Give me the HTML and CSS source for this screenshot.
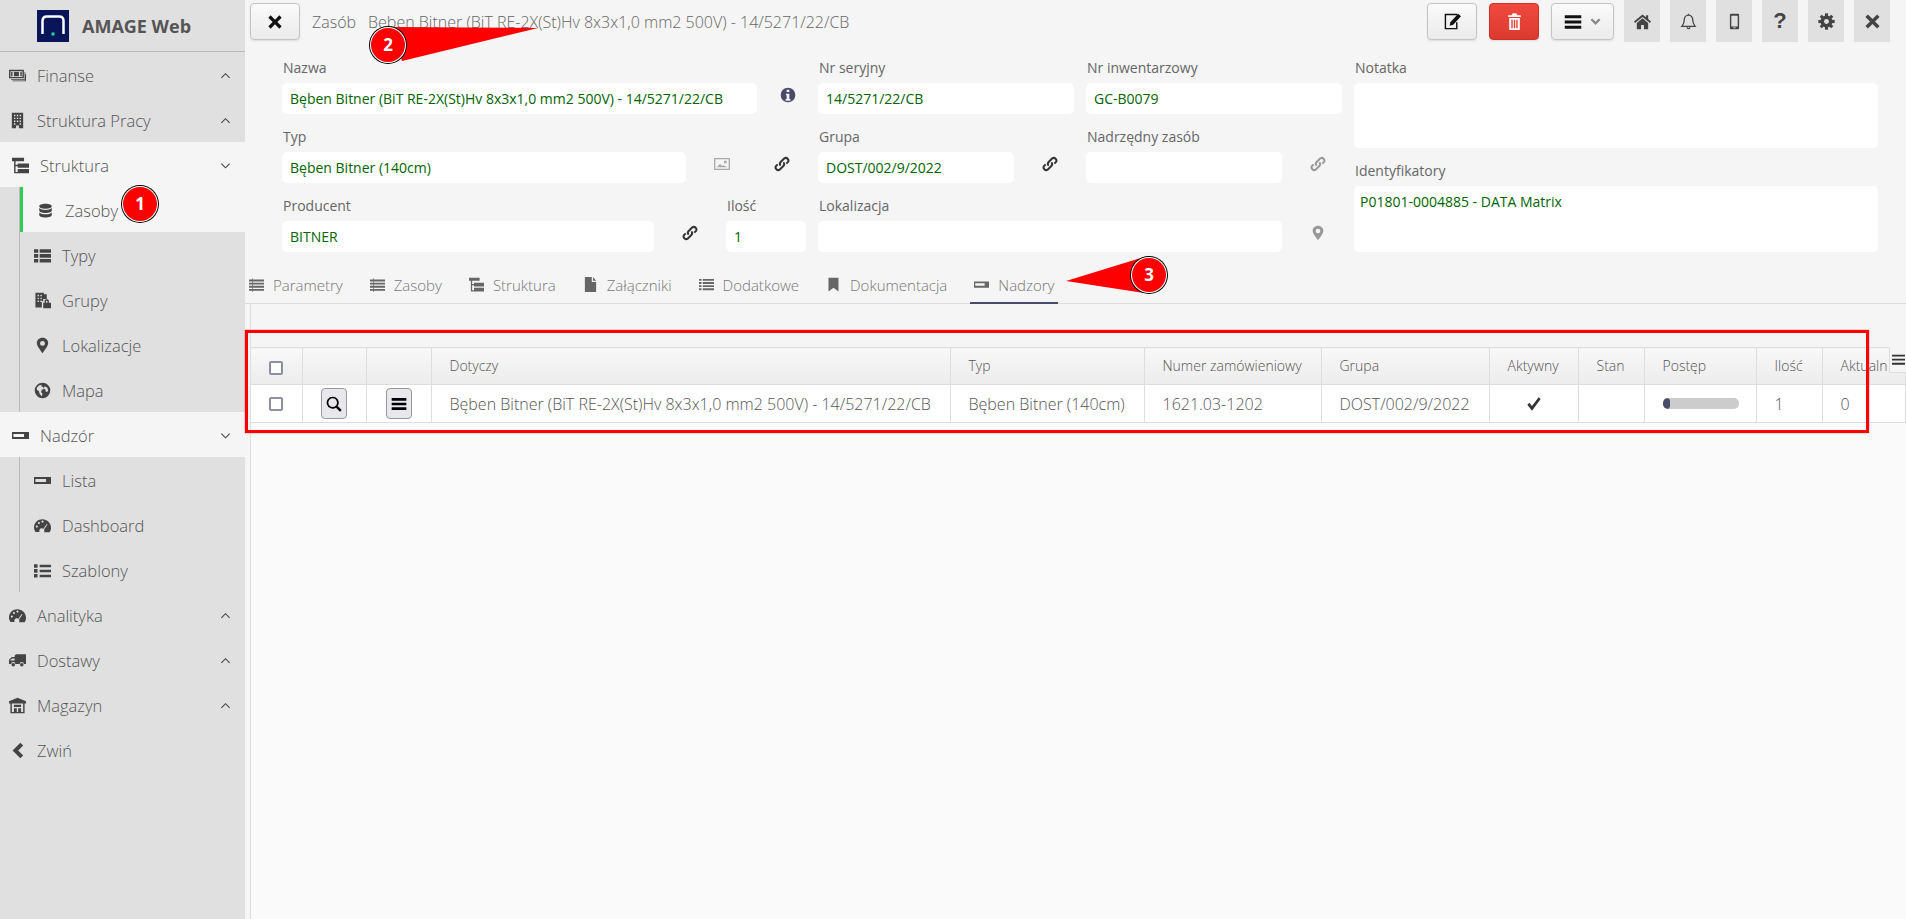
FILE: index.html
```html
<!DOCTYPE html>
<html lang="pl">
<head>
    <meta charset="UTF-8">
    <title>AMAGE Web</title>
    <link rel="stylesheet" href="styles.css">
</head>
<body>
    <svg class="sprite" width="0" height="0">
        <symbol id="i-money" viewBox="0 0 24 24"><path fill-rule="evenodd" d="M0 4h21v12H0zM2 6v8h17V6zM7 7h7v6H7zM3 7h2v6H3zM16 7h2v6h-2zM22 7h1v11H3v-1h19zM23 10h1v10H5v-1h18z"/></symbol>
        <symbol id="i-building" viewBox="0 0 24 24"><path fill-rule="evenodd" d="M4 1h16v22h-6v-4h-4v4H4zM7 4v2h2V4zm4 0v2h2V4zm4 0v2h2V4zM7 8v2h2V8zm4 0v2h2V8zm4 0v2h2V8zM7 12v2h2v-2zm4 0v2h2v-2zm4 0v2h2v-2zM7 16v2h2v-2zm8 0v2h2v-2z"/></symbol>
        <symbol id="i-tree" viewBox="0 0 24 24"><path d="M0 1h17v5H0zM8 9h16v6H8zM8 17h16v6H8zM3 6h2v15h3v2H3zM5 11h3v2H5z"/></symbol>
        <symbol id="i-database" viewBox="0 0 24 24"><path d="M12 1C6 1 2 2.800 2 5s4 4 10 4 10-1.800 10-4-4-4-10-4zM2 8v4c0 2.200 4 4 10 4s10-1.800 10-4V8c-2 2-6 3-10 3S4 10 2 8zm0 7v4c0 2.200 4 4 10 4s10-1.800 10-4v-4c-2 2-6 3-10 3s-8-1-10-3z"/></symbol>
        <symbol id="i-thlist" viewBox="0 0 24 24"><path d="M0 3h6v5H0zM8 3h16v5H8zM0 10h6v5H0zM8 10h16v5H8zM0 17h6v5H0zM8 17h16v5H8z"/></symbol>
        <symbol id="i-list" viewBox="0 0 24 24"><path d="M0 4h24v3H0zM0 9h24v3H0zM0 14h24v3H0zM0 19h24v3H0z M5 2h1v22H5z"/></symbol>
        <symbol id="i-lines" viewBox="0 0 24 24"><path d="M0 3h4v3H0zM6 3h18v3H6zM0 8h4v3H0zM6 8h18v3H6zM0 13h4v3H0zM6 13h18v3H6zM0 18h4v3H0zM6 18h18v3H6z"/></symbol>
        <symbol id="i-grouplock" viewBox="0 0 24 24"><path fill-rule="evenodd" d="M3 1h11v2h4v7h-5v3h-2v9H2V1zM5 4v2h2V4zm4 0v2h2V4zM5 8v2h2V8zm4 0v2h2V8zM5 12v2h2v-2zm4 0v2h2v-2z"/><path d="M13 15h11v8H13zM15 15v-2.500c0-3 6-3 6 0V15h-2v-2c0-1-2-1-2 0v2z"/></symbol>
        <symbol id="i-pin" viewBox="0 0 24 24"><path fill-rule="evenodd" d="M12 1C7 1 4 4.500 4 8.500 4 13 9.500 19 12 23c2.500-4 8-10 8-14.500C20 4.500 17 1 12 1zm0 4.500a3.500 3.500 0 1 1 0 7 3.500 3.500 0 0 1 0-7z"/></symbol>
        <symbol id="i-globe" viewBox="0 0 24 24"><path fill-rule="evenodd" d="M12 1a11 11 0 1 0 0 22 11 11 0 0 0 0-22zM4 8l3-3 4-1-1 2 3 1 1 3-3 1-1 3 2 3-1 3-3-3-1-4-3-2zm11-2 4 2 1 5-3 1-1-3-2-2z"/></symbol>
        <symbol id="i-slot" viewBox="0 0 24 24"><path fill-rule="evenodd" d="M0 7h24v10H0zM2 10h15v4H2z"/></symbol>
        <symbol id="i-gauge" viewBox="0 0 24 24"><path fill-rule="evenodd" d="M12 3C5.500 3 0 8 0 14.500c0 2.500.8 4.500 2 6.500h6c-1-1.500-.5-3.500 1-4.500s3.500-.5 4 .5l5-7 1 .7-5 7.300c1 1 1 2.500 0 3.500h8c1.300-2 2-4 2-6.500C24 8 18.500 3 12 3zM4 15a1.500 1.500 0 1 1 0-3 1.500 1.500 0 0 1 0 3zm3-5a1.500 1.500 0 1 1 0-3 1.500 1.500 0 0 1 0 3zm5-2a1.500 1.500 0 1 1 0-3 1.500 1.500 0 0 1 0 3z"/></symbol>
        <symbol id="i-ul" viewBox="0 0 24 24"><path d="M0 3h5v5H0zM8 4h16v3.500H8zM0 10h5v5H0zM8 11h16v3.500H8zM0 17h5v5H0zM8 18h16v3.500H8z"/></symbol>
        <symbol id="i-truck" viewBox="0 0 24 24"><path fill-rule="evenodd" d="M10 3h14v14h-3a3 3 0 0 0-6 0H9a3 3 0 0 0-6 0H0v-6l4-4h4V5zM2 11v1h6V9H5z"/><circle cx="6" cy="18" r="2.500"/><circle cx="18" cy="18" r="2.500"/></symbol>
        <symbol id="i-store" viewBox="0 0 24 24"><path fill-rule="evenodd" d="M12 1 0 6v3h2v14h20V9h2V6zM4 9h16v12h-3v-5h-4v5h-2v-5H7v5H4zM7 11v3h10v-3z"/></symbol>
        <symbol id="i-link" viewBox="0 0 24 24"><path fill="none" stroke="currentColor" stroke-width="3" d="M10 14.500a4 4 0 0 1 0-5.500l5.500-5.500a4 4 0 0 1 5.500 5.500L18.500 11.500M14 9.500a4 4 0 0 1 0 5.500l-5.500 5.500A4 4 0 0 1 3 15l2.500-2.500"/></symbol>
        <symbol id="i-info" viewBox="0 0 24 24"><path fill-rule="evenodd" d="M12 1a11 11 0 1 0 0 22 11 11 0 0 0 0-22zM10 4h4v3.500h-4zM9 10h5v8h1.500v2.500h-7V18H10v-5.500H9z"/></symbol>
        <symbol id="i-image" viewBox="0 0 24 24"><path fill-rule="evenodd" d="M0 3h24v18H0zM2 5v14h20V5zM4 17l5-5 3 3 2-1 6 3zM15 7h4v4h-4z"/></symbol>
        <symbol id="i-file" viewBox="0 0 24 24"><path d="M3 0h11v8h7v16H3zM16 0l5 6h-5z"/></symbol>
        <symbol id="i-bookmark" viewBox="0 0 24 24"><path d="M4 1h16v22l-8-6-8 6z"/></symbol>
        <symbol id="i-edit" viewBox="0 0 24 24"><path fill-rule="evenodd" d="M1 1h18v2H3v18h14v-8h2v10H1z"/><path d="M20 1l4 3.500-11 12-5 1.500 1-5z"/></symbol>
        <symbol id="i-trash" viewBox="0 0 24 24"><path fill-rule="evenodd" d="M8 3l1.500-2.500h5L16 3h5v2.500H3V3zM4.500 7h15v17h-15zM7.500 9.500v12h2v-12zm3.500 0v12h2v-12zm3.500 0v12h2v-12z"/></symbol>
        <symbol id="i-bars" viewBox="0 0 24 24"><path d="M1 3h22v4H1zM1 10h22v4H1zM1 17h22v4H1z"/></symbol>
        <symbol id="i-thin-bars" viewBox="0 0 24 24"><path d="M0 3h24v3.500H0zM0 10.500h24V14H0zM0 18h24v3.500H0z"/></symbol>
        <symbol id="i-home" viewBox="0 0 24 24"><path d="M12 2 0 12l1.500 2L12 5.500 22.500 14l1.500-2-4-3.500V3h-3v3zM12 7.500 4 14v9h6v-6h4v6h6v-9z"/></symbol>
        <symbol id="i-bell" viewBox="0 0 24 24"><path fill="none" stroke="currentColor" stroke-width="1.800" d="M12 3c-4 0-6 3-6 7 0 5-2 7-3.500 9h19c-1.500-2-3.500-4-3.500-9 0-4-2-7-6-7zM12 3V1M10 20a2 2 0 0 0 4 0"/></symbol>
        <symbol id="i-phone" viewBox="0 0 24 24"><path fill-rule="evenodd" d="M7 1h10a1.500 1.500 0 0 1 1.500 1.500v19A1.500 1.500 0 0 1 17 23H7a1.500 1.500 0 0 1-1.500-1.500v-19A1.500 1.500 0 0 1 7 1zM7.500 4v15h9V4zM10.500 20v1.500h3V20z"/></symbol>
        <symbol id="i-cog" viewBox="0 0 24 24"><path fill-rule="evenodd" d="M12 3.500a8.500 8.500 0 1 0 0 17 8.500 8.500 0 0 0 0-17zm0 5a3.500 3.500 0 1 1 0 7 3.500 3.500 0 0 1 0-7z"/><g><rect x="9.800" y="0.500" width="4.400" height="4"/><rect x="9.800" y="19.500" width="4.400" height="4"/><rect x="0.500" y="9.800" width="4" height="4.400"/><rect x="19.500" y="9.800" width="4" height="4.400"/><rect x="9.800" y="0.500" width="4.400" height="4" transform="rotate(45 12 12)"/><rect x="9.800" y="19.500" width="4.400" height="4" transform="rotate(45 12 12)"/><rect x="0.500" y="9.800" width="4" height="4.400" transform="rotate(45 12 12)"/><rect x="19.500" y="9.800" width="4" height="4.400" transform="rotate(45 12 12)"/></g></symbol>
        <symbol id="i-times" viewBox="0 0 24 24"><path d="M5.500 2 12 8.500 18.500 2 22 5.500 15.500 12l6.500 6.500-3.500 3.500L12 15.500 5.500 22 2 18.500 8.500 12 2 5.500z"/></symbol>
        <symbol id="i-search" viewBox="0 0 24 24"><path fill-rule="evenodd" d="M10 1a9 9 0 1 0 5 16.500l6 6 2.500-2.500-6-6A9 9 0 0 0 10 1zm0 2.500a6.500 6.500 0 1 1 0 13 6.500 6.500 0 0 1 0-13z"/></symbol>
        <symbol id="i-check" viewBox="0 0 24 24"><path d="M9 22 2 13l3-3 4 5L19 2l3 2.500z"/></symbol>
        <symbol id="i-up" viewBox="0 0 24 24"><path fill="none" stroke="currentColor" stroke-width="2.400" d="M3 17 12 8l9 9"/></symbol>
        <symbol id="i-down" viewBox="0 0 24 24"><path fill="none" stroke="currentColor" stroke-width="2.400" d="M3 8l9 9 9-9"/></symbol>
        <symbol id="i-caret" viewBox="0 0 24 24"><path fill="none" stroke="currentColor" stroke-width="5" d="M3 7l9 9 9-9"/></symbol>
        <symbol id="i-left" viewBox="0 0 24 24"><path d="M16 1l4 4-7 7 7 7-4 4L5 12z"/></symbol>
    </svg>

    <aside class="sidebar">
        <div class="brand">
            <svg class="logo" viewBox="0 0 32 32"><rect width="32" height="32" fill="#0a1459"/><path d="M5.500 24V11c0-3 2-4.500 4.500-4.500h12c2.500 0 4.500 1.500 4.500 4.500v13" fill="none" stroke="#fff" stroke-width="2.500"/><rect x="14.500" y="22.500" width="3" height="3" fill="#2fd8a8"/></svg>
            <span>AMAGE Web</span>
        </div>
        <nav>
            <a class="item"><svg class="ico"><use href="#i-money"/></svg><span>Finanse</span><svg class="chev"><use href="#i-up"/></svg></a>
            <a class="item"><svg class="ico"><use href="#i-building"/></svg><span>Struktura Pracy</span><svg class="chev"><use href="#i-up"/></svg></a>
            <a class="item open tree-head"><svg class="ico"><use href="#i-tree"/></svg><span>Struktura</span><svg class="chev"><use href="#i-down"/></svg></a>
            <div class="sub">
                <a class="item active"><svg class="ico"><use href="#i-database"/></svg><span>Zasoby</span></a>
                <a class="item"><svg class="ico"><use href="#i-thlist"/></svg><span>Typy</span></a>
                <a class="item"><svg class="ico"><use href="#i-grouplock"/></svg><span>Grupy</span></a>
                <a class="item"><svg class="ico"><use href="#i-pin"/></svg><span>Lokalizacje</span></a>
                <a class="item"><svg class="ico"><use href="#i-globe"/></svg><span>Mapa</span></a>
            </div>
            <a class="item open tree-head"><svg class="ico"><use href="#i-slot"/></svg><span>Nadzór</span><svg class="chev"><use href="#i-down"/></svg></a>
            <div class="sub">
                <a class="item"><svg class="ico"><use href="#i-slot"/></svg><span>Lista</span></a>
                <a class="item"><svg class="ico"><use href="#i-gauge"/></svg><span>Dashboard</span></a>
                <a class="item"><svg class="ico"><use href="#i-ul"/></svg><span>Szablony</span></a>
            </div>
            <a class="item"><svg class="ico"><use href="#i-gauge"/></svg><span>Analityka</span><svg class="chev"><use href="#i-up"/></svg></a>
            <a class="item"><svg class="ico"><use href="#i-truck"/></svg><span>Dostawy</span><svg class="chev"><use href="#i-up"/></svg></a>
            <a class="item"><svg class="ico"><use href="#i-store"/></svg><span>Magazyn</span><svg class="chev"><use href="#i-up"/></svg></a>
            <a class="item"><svg class="ico"><use href="#i-left"/></svg><span>Zwiń</span></a>
        </nav>
    </aside>

    <main class="main">
        <header class="topbar">
            <button class="btn btn-close"><svg><use href="#i-times"/></svg></button>
            <span class="crumb">Zasób</span>
            <span class="crumb-title">Bęben Bitner (BiT RE-2X(St)Hv 8x3x1,0 mm2 500V) - 14/5271/22/CB</span>
            <div class="top-actions">
                <button class="btn btn-edit"><svg><use href="#i-edit"/></svg></button>
                <button class="btn btn-edit btn-red"><svg><use href="#i-trash"/></svg></button>
                <button class="btn btn-menu"><svg class="bars"><use href="#i-bars"/></svg><svg class="caret"><use href="#i-caret"/></svg></button>
                <div class="squares">
                    <a class="square"><svg><use href="#i-home"/></svg></a>
                    <a class="square"><svg><use href="#i-bell"/></svg></a>
                    <a class="square"><svg><use href="#i-phone"/></svg></a>
                    <a class="square qmark">?</a>
                    <a class="square"><svg><use href="#i-cog"/></svg></a>
                    <a class="square"><svg><use href="#i-times"/></svg></a>
                </div>
            </div>
        </header>

        <section class="form">
            <div class="field w-name">
                <label>Nazwa</label>
                <div class="line"><div class="input">Bęben Bitner (BiT RE-2X(St)Hv 8x3x1,0 mm2 500V) - 14/5271/22/CB</div><svg class="fi fi-info"><use href="#i-info"/></svg></div>
            </div>
            <div class="field">
                <label>Nr seryjny</label>
                <div class="line"><div class="input">14/5271/22/CB</div></div>
            </div>
            <div class="field">
                <label>Nr inwentarzowy</label>
                <div class="line"><div class="input">GC-B0079</div></div>
            </div>
            <div class="field side">
                <label>Notatka</label>
                <div class="input area note"></div>
                <label>Identyfikatory</label>
                <div class="input area ids">P01801-0004885 - DATA Matrix</div>
            </div>

            <div class="field">
                <label>Typ</label>
                <div class="line"><div class="input w-type">Bęben Bitner (140cm)</div><svg class="fi fi-img"><use href="#i-image"/></svg><svg class="fi fi-typelink"><use href="#i-link"/></svg></div>
            </div>
            <div class="field">
                <label>Grupa</label>
                <div class="line"><div class="input w-short">DOST/002/9/2022</div><svg class="fi fi-link"><use href="#i-link"/></svg></div>
            </div>
            <div class="field">
                <label>Nadrzędny zasób</label>
                <div class="line"><div class="input w-short"></div><svg class="fi fi-link off"><use href="#i-link"/></svg></div>
            </div>

            <div class="pair">
                <div class="field">
                    <label>Producent</label>
                    <div class="line"><div class="input w-prod">BITNER</div><svg class="fi fi-link"><use href="#i-link"/></svg></div>
                </div>
                <div class="field w-qty">
                    <label>Ilość</label>
                    <div class="line"><div class="input">1</div></div>
                </div>
            </div>
            <div class="field span2">
                <label>Lokalizacja</label>
                <div class="line"><div class="input w-loc"></div><svg class="fi fi-link off"><use href="#i-pin"/></svg></div>
            </div>
        </section>

        <nav class="tabs">
            <a class="tab"><svg><use href="#i-list"/></svg>Parametry</a>
            <a class="tab"><svg><use href="#i-list"/></svg>Zasoby</a>
            <a class="tab"><svg><use href="#i-tree"/></svg>Struktura</a>
            <a class="tab"><svg><use href="#i-file"/></svg>Załączniki</a>
            <a class="tab"><svg><use href="#i-lines"/></svg>Dodatkowe</a>
            <a class="tab"><svg><use href="#i-bookmark"/></svg>Dokumentacja</a>
            <a class="tab current"><svg><use href="#i-slot"/></svg>Nadzory</a>
        </nav>

        <section class="grid-area">
            <div class="grid-wrap">
                <table class="grid">
                    <colgroup>
                        <col class="c-check"><col class="c-act"><col class="c-act2"><col class="c-what"><col class="c-type"><col class="c-order"><col class="c-group"><col class="c-active"><col class="c-state"><col class="c-prog"><col class="c-qty"><col>
                    </colgroup>
                    <thead>
                        <tr>
                            <th class="center"><span class="check"></span></th>
                            <th></th>
                            <th class="split"></th>
                            <th>Dotyczy</th>
                            <th>Typ</th>
                            <th>Numer zamówieniowy</th>
                            <th>Grupa</th>
                            <th>Aktywny</th>
                            <th>Stan</th>
                            <th>Postęp</th>
                            <th>Ilość</th>
                            <th>Aktualn</th>
                        </tr>
                    </thead>
                    <tbody>
                        <tr>
                            <td class="center"><span class="check"></span></td>
                            <td class="center"><button class="mini"><svg class="mini-search"><use href="#i-search"/></svg></button></td>
                            <td class="center split"><button class="mini"><svg><use href="#i-bars"/></svg></button></td>
                            <td>Bęben Bitner (BiT RE-2X(St)Hv 8x3x1,0 mm2 500V) - 14/5271/22/CB</td>
                            <td>Bęben Bitner (140cm)</td>
                            <td>1621.03-1202</td>
                            <td>DOST/002/9/2022</td>
                            <td class="center"><svg class="tick"><use href="#i-check"/></svg></td>
                            <td></td>
                            <td><div class="progress"><div class="progress-bar" style="width:10%"></div></div></td>
                            <td>1</td>
                            <td>0</td>
                        </tr>
                    </tbody>
                </table>
                <button class="col-menu"><svg><use href="#i-thin-bars"/></svg></button>
            </div>
        </section>
    </main>

    <!-- annotations drawn on top of the screenshot -->
    <div class="mark-box"></div>
    <svg class="marks" viewBox="0 0 1906 919">
        <polygon points="538,28 392,27 402,61" fill="#f00"/>
        <polygon points="1066,281 1144,257 1144,293" fill="#f00"/>
        <g class="badge"><circle class="ring-out" cx="140" cy="204" r="19"/><circle class="ring-in" cx="140" cy="204" r="18"/><circle class="disc" cx="140" cy="204" r="17"/><text x="140" y="210">1</text></g>
        <g class="badge"><circle class="ring-out" cx="388" cy="45" r="19"/><circle class="ring-in" cx="388" cy="45" r="18"/><circle class="disc" cx="388" cy="45" r="17"/><text x="388" y="51">2</text></g>
        <g class="badge"><circle class="ring-out" cx="1149" cy="275" r="19"/><circle class="ring-in" cx="1149" cy="275" r="18"/><circle class="disc" cx="1149" cy="275" r="17"/><text x="1149" y="281">3</text></g>
    </svg>
</body>
</html>
```

FILE: styles.css
```css
* { margin: 0; padding: 0; box-sizing: border-box; }
html, body { height: 100%; }
body {
    display: flex; height: 919px; overflow: hidden;
    font-family: "Open Sans", sans-serif; font-size: 16px; color: #666; background: #f5f5f5;
}
.sprite { position: absolute; }
svg { fill: currentColor; display: block; }

/* sidebar */
.sidebar { width: 245px; flex: none; background: #e0e0e0; }
.brand {
    display: flex; align-items: center; gap: 13px; height: 52px; padding-left: 37px;
    border-bottom: 1px solid #bbb; font-size: 18px; font-weight: 700; color: #555;
}
.logo { width: 32px; height: 32px; }
.item { display: flex; align-items: center; height: 45px; padding: 2px 0 0 9px; color: #555; font-size: 16.5px; font-weight: 300; }
.item .ico { width: 17px; height: 17px; margin-right: 11px; flex: none; color: #444; }
.item .chev { width: 11px; height: 11px; margin-left: auto; margin-right: 14px; color: #444; }
.item.open { background: #f5f5f5; }
.tree-head { padding-left: 12px; }
.sub { margin-left: 19px; border-left: 1px solid #bbb; }
.sub .item { padding-left: 14px; }
.sub .active { background: #f5f5f5; border-left: 3px solid #2ecc52; padding-left: 16px; margin-left: 0; }
.sub .active .ico { width: 15px; height: 15px; margin-left: -1px; margin-right: 12px; }

/* top bar */
.main { flex: 1; min-width: 0; display: flex; flex-direction: column; }
.topbar { display: flex; align-items: flex-start; height: 45px; padding-left: 5px; }
.btn {
    height: 37px; margin-top: 3px; border: 1px solid #c4c4c4; border-radius: 4px; cursor: pointer;
    background: linear-gradient(#fafafa, #ebebeb); box-shadow: 0 1px 2px rgba(0, 0, 0, 0.1);
    display: inline-flex; align-items: center; justify-content: center; color: #111;
}
.btn-close { width: 50px; }
.btn-close svg { width: 16px; height: 16px; }
.crumb, .crumb-title { line-height: 44px; color: #666; font-weight: 300; }
.crumb { margin-left: 12px; }
.crumb-title { margin-left: 12px; }
.top-actions { margin-left: auto; display: flex; align-items: flex-start; padding-right: 16px; }
.btn-edit { width: 50px; margin-right: 12px; }
.btn-edit svg { width: 17px; height: 17px; }
.btn-red { background: linear-gradient(#f04a3e, #dc392e); border-color: #c9332a; color: #fff; }
.btn-menu { width: 63px; gap: 8px; margin-right: 10px; }
.btn-menu .bars { width: 18px; height: 18px; }
.btn-menu .caret { width: 11px; height: 11px; color: #888; }
.squares { display: flex; gap: 10px; }
.square {
    width: 36px; height: 42px; background: #e0e0e0; color: #444;
    display: flex; align-items: center; justify-content: center;
}
.square svg { width: 17px; height: 17px; }
.qmark { font-family: "Liberation Sans", sans-serif; font-size: 22px; font-weight: 700; }

/* form */
.form {
    display: grid; grid-template-columns: 524px 256px 256px 524px; grid-template-rows: repeat(3, 69px);
    column-gap: 12px; padding-left: 37px; height: 207px; flex: none;
}
.field label {
    display: block; height: 38px; padding: 13px 0 0 1px; line-height: 20px;
    font-size: 14px; color: #666;
}
.line { display: flex; align-items: flex-start; }
.input {
    height: 31px; flex: 1; min-width: 0; background: #fff; border-radius: 5px; padding: 0 8px;
    font-size: 14px; line-height: 31px; color: #006400; white-space: nowrap;
}
.w-name .input { flex: none; width: 475px; }
.w-type { flex: none; width: 404px; }
.w-short { flex: none; width: 196px; }
.w-prod { flex: none; width: 372px; }
.w-loc { flex: none; width: 464px; }
.fi { width: 16px; height: 16px; margin-top: 4px; flex: none; color: #333; }
.fi-info { color: #4a4a6a; margin-left: 23px; }
.fi-img { color: #aaa; margin-left: 28px; }
.fi-typelink { margin-left: 44px; }
.fi-link { margin-left: 28px; }
.off { color: #999; }
.side { grid-column: 4; grid-row: 1 / span 3; }
.area { line-height: 20px; padding: 6px; flex: none; }
.note { height: 65px; }
.ids { height: 66px; }
.pair { display: flex; }
.pair .field:first-child { width: 444px; }
.w-qty { width: 80px; }
.span2 { grid-column: 2 / span 2; }

/* tabs */
.tabs {
    display: flex; gap: 19px; height: 52px; padding-top: 21px; flex: none;
    border-bottom: 1px solid #ddd; font-size: 15px; font-weight: 300; color: #888;
}
.tab { display: flex; align-items: center; gap: 9px; height: 31px; padding: 0 4px 6px; border-bottom: 2px solid transparent; color: #777; }
.tab svg { width: 15px; height: 15px; color: #666; }
.tab.current { border-bottom-color: #4a4a6a; }

/* results table */
.grid-area { flex: 1; margin-left: 5px; padding-top: 43px; background: #fafafa; border-left: 1px solid #ddd; background-clip: padding-box; }
.grid-area { box-shadow: inset 0 43px 0 #f5f5f5; }
.grid-wrap { position: relative; overflow: hidden; }
.grid { table-layout: fixed; width: 100%; border-collapse: collapse; font-size: 16px; font-weight: 300; color: #555; }
.grid th, .grid td {
    height: 38px; padding: 0 18px; border: 1px solid #ddd; border-left: 0; text-align: left;
    white-space: nowrap; overflow: hidden; font-weight: 300;
}
.grid th { height: 37px; padding-bottom: 2px; font-size: 14px; color: #555; background: linear-gradient(#f8f8f8, #ececec); }
.grid td { background: #fff; }
.grid th.center, .grid td.center { padding: 0; }
.split { box-shadow: 1px 0 2px rgba(0, 0, 0, 0.12); }
.c-check { width: 51px; } .c-act { width: 64px; } .c-act2 { width: 65px; } .c-what { width: 519px; }
.c-type { width: 194px; } .c-order { width: 177px; } .c-group { width: 168px; } .c-active { width: 89px; }
.c-state { width: 66px; } .c-prog { width: 112px; } .c-qty { width: 66px; }
.check { display: block; width: 14px; height: 14px; margin: 0 auto; background: #fff; border: 2px solid #8f8fa3; border-radius: 2px; }
.grid th .check { margin-top: 3px; }
.mini {
    display: flex; align-items: center; justify-content: center; width: 26px; height: 31px; margin: 0 auto;
    background: #e8e8ec; border: 1px solid #999; border-radius: 4px; color: #000;
}
.mini svg { width: 16px; height: 16px; }
.tick { width: 16px; height: 16px; margin: 0 auto; color: #333; }
.progress { height: 11px; width: 76px; background: #ccc; border-radius: 5px; overflow: hidden; }
.progress-bar { height: 100%; background: #4a4a6a; border-radius: 5px; }
.col-menu {
    position: absolute; right: 0; top: 0; width: 17px; height: 26px; background: #f5f5f5;
    border: 0; border-left: 1px solid #ddd; border-bottom: 1px solid #ddd; color: #333;
    display: flex; align-items: center; justify-content: center;
}
.col-menu svg { width: 13px; height: 13px; }

/* annotations */
.mark-box {
    position: absolute; left: 245px; top: 330px; width: 1624px; height: 103px;
    border: 3px solid #f00; box-shadow: 0 0 1px #f00;
}
.marks { position: absolute; left: 0; top: 0; width: 1906px; height: 919px; pointer-events: none; }
.ring-out { fill: #000; }
.ring-in { fill: #fff; }
.disc { fill: #f00; }
.badge text { fill: #fff; font-family: "Open Sans", sans-serif; font-weight: 700; font-size: 17px; text-anchor: middle; }
```
